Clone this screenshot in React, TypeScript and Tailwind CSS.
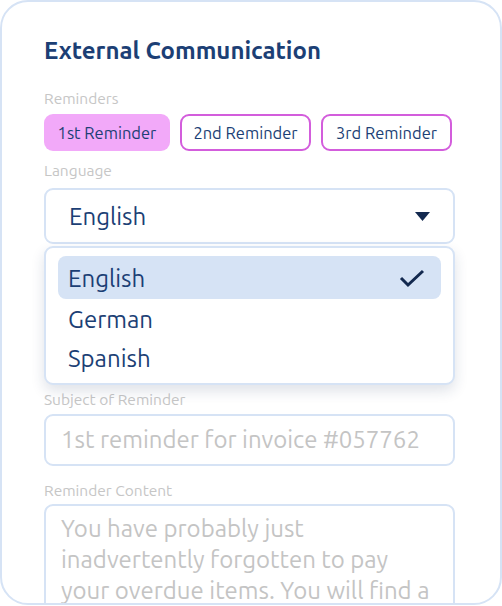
import { useState } from 'react';

const reminders = ['1st Reminder', '2nd Reminder', '3rd Reminder'];
const languages = ['English', 'German', 'Spanish'];

export default function App() {
  const [active, setActive] = useState(0);
  const [lang, setLang] = useState('English');

  return (
    <div className="w-[502px] h-[606px] bg-white font-['Ubuntu','Noto_Sans',sans-serif]">
      <div className="h-[605px] border-2 border-[#d6e3f5] rounded-[28px] overflow-hidden pl-[42px] pr-[45px] pt-[34px]">
        <h2 className="text-[24px] font-bold text-[#1c3f75] leading-[30px]">External Communication</h2>

        <div className="mt-[24px] text-[15.5px] text-[#c6c6c6] leading-[18px]">Reminders</div>
        <div className="mt-[6px] flex gap-[10px]">
          {reminders.map((r, i) => (
            <button
              key={r}
              onClick={() => setActive(i)}
              className={
                i === active
                  ? 'h-[37px] w-[126px] rounded-[9px] bg-[#f2a9f9] text-[16.5px] leading-[20px] text-[#1c3f75]'
                  : 'h-[37px] w-[131px] rounded-[9px] border-2 border-[#d35ddc] text-[16.5px] leading-[20px] text-[#1c3f75]'
              }
            >
              {r}
            </button>
          ))}
        </div>

        <div className="mt-[11px] text-[15.5px] text-[#c6c6c6] leading-[18px]">Language</div>
        <div className="relative mt-[8px]">
          <div className="h-[56px] border-2 border-[#d6e3f5] rounded-[9px] flex items-center justify-between pl-[23px] pr-[23px]">
            <span className="pt-[2px] text-[24px] leading-[30px] text-[#1c3f75]">{lang}</span>
            <svg width="15" height="9" viewBox="0 0 15 9">
              <path d="M0 0h15L7.5 9z" fill="#13294f" />
            </svg>
          </div>
          <div className="absolute left-0 right-0 top-[58px] z-10 bg-white border-2 border-[#d6e3f5] rounded-[9px] shadow-[0_6px_14px_rgba(30,50,90,0.14)] px-[12px] pt-[8px] pb-[6px]">
            {languages.map((l) => (
              <div
                key={l}
                onClick={() => setLang(l)}
                className={
                  l === lang
                    ? 'h-[43px] rounded-[8px] bg-[#d6e3f5] flex items-center justify-between pl-[10px] pr-[16px] text-[24px] leading-[30px] text-[#1c3f75]'
                    : 'h-[39px] flex items-center pl-[10px] text-[24px] leading-[30px] text-[#1c3f75]'
                }
              >
                <span className="pt-[3px]">{l}</span>
                {l === lang && (
                  <svg width="26" height="20" viewBox="0 0 26 20">
                    <path d="M2 10l7 7L24 3" stroke="#13294f" strokeWidth="3" fill="none" />
                  </svg>
                )}
              </div>
            ))}
          </div>
        </div>

        <div className="mt-[147px] text-[15.5px] text-[#c6c6c6] leading-[18px]">Subject of Reminder</div>
        <div className="mt-[5px] h-[52px] border-2 border-[#d6e3f5] rounded-[9px] flex items-center pl-[15px] text-[24px] leading-[30px] text-[#c4c4c4] whitespace-nowrap">
          1st reminder for invoice #057762
        </div>

        <div className="mt-[16px] text-[15.5px] text-[#c6c6c6] leading-[18px]">Reminder Content</div>
        <div className="mt-[4px] h-[140px] border-2 border-[#d6e3f5] rounded-[9px] px-[15px] pt-[7px] text-[24px] leading-[31px] text-[#c4c4c4]">
          You have probably just inadvertently forgotten to pay your overdue items. You will find a
        </div>
      </div>
    </div>
  );
}
